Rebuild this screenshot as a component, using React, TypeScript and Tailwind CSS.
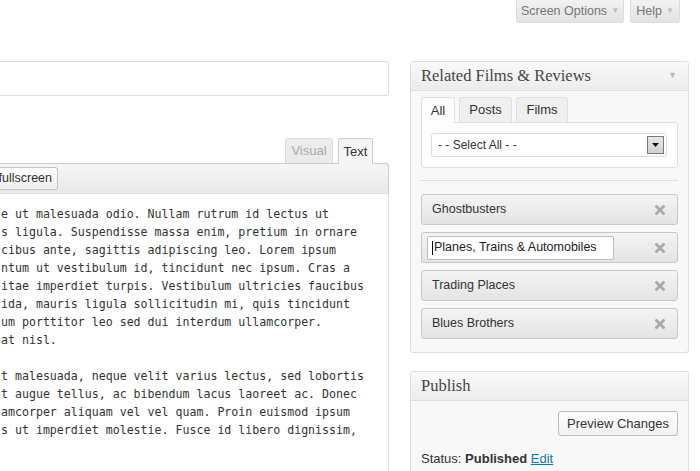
import type { ReactNode } from "react";

const films = ["Ghostbusters", "Planes, Trains & Automobiles", "Trading Places", "Blues Brothers"];

const paraOne = [
  "e ut malesuada odio. Nullam rutrum id lectus ut",
  "s ligula. Suspendisse massa enim, pretium in ornare",
  "cibus ante, sagittis adipiscing leo. Lorem ipsum",
  "ntum ut vestibulum id, tincidunt nec ipsum. Cras a",
  "itae imperdiet turpis. Vestibulum ultricies faucibus",
  "ida, mauris ligula sollicitudin mi, quis tincidunt",
  "um porttitor leo sed dui interdum ullamcorper.",
  "at nisl.",
];

const paraTwo = [
  "t malesuada, neque velit varius lectus, sed lobortis",
  "t augue tellus, ac bibendum lacus laoreet ac. Donec",
  "amcorper aliquam vel vel quam. Proin euismod ipsum",
  "s ut imperdiet molestie. Fusce id libero dignissim,",
];

function RemoveIcon() {
  return (
    <svg width="10" height="10" viewBox="0 0 10 10" className="shrink-0">
      <path d="M1.5 1.5 L8.5 8.5 M8.5 1.5 L1.5 8.5" stroke="#a9a9a9" strokeWidth="2.8" strokeLinecap="square" />
    </svg>
  );
}

function Panel({ title, arrow, children }: { title: string; arrow?: boolean; children: ReactNode }) {
  return (
    <div className="rounded-[3px] border border-[#dfdfdf] bg-[#f8f8f8]">
      <div className="flex h-[29px] items-center justify-between border-b border-[#dfdfdf] bg-gradient-to-b from-[#f9f9f9] to-[#ececec] pl-[10px] pr-[11px]">
        <span className="font-['Liberation_Serif',serif] text-[16.5px] text-[#464646]">{title}</span>
        {arrow && <span className="text-[9px] text-[#bbb]">▼</span>}
      </div>
      {children}
    </div>
  );
}

export default function App() {
  return (
    <div className="h-[471px] w-[700px] overflow-hidden bg-white font-['Liberation_Sans',Arial,sans-serif] text-[#333]">
      {/* top tabs */}
      <div className="flex h-[23px] justify-end gap-[6px] pr-[20px]">
        <div className="flex h-[23px] w-[108px] items-center justify-center gap-[4px] rounded-b-[3px] border border-t-0 border-[#dcdcdc] bg-gradient-to-b from-[#f2f2f2] to-[#e2e2e2] text-[12.5px] text-[#777]">
          Screen Options <span className="text-[8px] text-[#bbb]">▼</span>
        </div>
        <div className="flex h-[23px] w-[50px] items-center justify-center gap-[4px] rounded-b-[3px] border border-t-0 border-[#dcdcdc] bg-gradient-to-b from-[#f2f2f2] to-[#e2e2e2] text-[12.5px] text-[#777]">
          Help <span className="text-[8px] text-[#bbb]">▼</span>
        </div>
      </div>

      <div className="mt-[38px] flex">
        {/* editor column */}
        <div className="w-[389px] shrink-0">
          <div className="h-[35px] rounded-r-[3px] border border-l-0 border-[#dddddd] bg-white" />

          <div className="mt-[42px] flex justify-end gap-[5px] pr-[16px]">
            <div className="flex h-[25px] w-[48px] items-center justify-center rounded-t-[3px] border border-b-0 border-[#dfdfdf] bg-[#ebebeb] text-[13px] text-[#aaa]">
              Visual
            </div>
            <div className="flex h-[26px] w-[35px] -mb-px items-center justify-center rounded-t-[3px] border border-b-0 border-[#cccccc] bg-[#f5f5f5] text-[13px] text-[#333]">
              Text
            </div>
          </div>

          <div className="flex h-[31px] items-center rounded-tr-[3px] border border-l-0 border-[#cccccc] border-b-[#dfdfdf] bg-gradient-to-b from-[#f5f5f5] to-[#e9e9e9]">
            <div className="flex h-[23px] w-[58px] items-center justify-end rounded-r-[3px] border border-l-0 border-[#c3c3c3] bg-gradient-to-b from-[#fdfdfd] to-[#f0f0f0] pr-[5px] text-[12.5px] text-[#333]">
              fullscreen
            </div>
          </div>

          <div className="h-[300px] border-r border-[#dfdfdf] bg-white pt-[11px] pl-[1px] font-['DejaVu_Sans_Mono',monospace] text-[11.6px] leading-[18px] text-[#333]">
            {paraOne.map((l) => (
              <div key={l} className="whitespace-pre">{l}</div>
            ))}
            <div className="h-[18px]" />
            {paraTwo.map((l) => (
              <div key={l} className="whitespace-pre">{l}</div>
            ))}
          </div>
        </div>

        {/* sidebar */}
        <div className="ml-[21px] w-[279px] shrink-0">
          <Panel title="Related Films & Reviews" arrow>
            <div className="px-[10px] pt-[6px] pb-[13px]">
              <div className="flex gap-[4px] text-[13px]">
                <div className="relative z-10 -mb-px flex h-[26px] w-[34px] items-center justify-center rounded-t-[3px] border border-b-0 border-[#dfdfdf] bg-[#fdfdfd]">
                  All
                </div>
                <div className="flex h-[25px] w-[53px] items-center justify-center rounded-t-[3px] border border-b-0 border-[#dfdfdf] bg-[#efefef]">
                  Posts
                </div>
                <div className="flex h-[25px] w-[52px] items-center justify-center rounded-t-[3px] border border-b-0 border-[#dfdfdf] bg-[#efefef]">
                  Films
                </div>
              </div>
              <div className="rounded-[3px] rounded-tl-none border border-[#dfdfdf] bg-[#fdfdfd] px-[9px] pt-[10px] pb-[10px] pr-[10px]">
                <div className="flex h-[24px] items-center justify-between rounded-[3px] border border-[#dddddd] bg-white pl-[6px] pr-[2px] text-[12px]">
                  <span>- - Select All - -</span>
                  <div className="flex h-[18px] w-[17px] items-center justify-center border border-[#7a7a7a] bg-gradient-to-b from-[#e8e8e8] to-[#d0d0d0]">
                    <svg width="7" height="4" viewBox="0 0 7 4">
                      <path d="M0 0 H7 L3.5 4 Z" fill="#111" />
                    </svg>
                  </div>
                </div>
              </div>

              <div className="mt-[12px] border-t border-[#dfdfdf]" />

              <div className="mt-[13px] flex flex-col gap-[7px]">
                {films.map((f, i) => (
                  <div
                    key={f}
                    className="flex h-[31px] items-center justify-between rounded-[3px] border border-[#c8c8c8] bg-gradient-to-b from-[#f4f4f4] to-[#e4e4e4] pr-[12px] text-[12.5px]"
                    style={{ paddingLeft: i === 1 ? 5 : 10 }}
                  >
                    {i === 1 ? (
                      <div className="relative flex h-[24px] w-[187px] items-center rounded-[2px] border border-[#bcbcbc] bg-white pl-[4px] text-[#222]">
                        <span className="mr-px inline-block h-[14px] w-px bg-black" />
                        {f}
                      </div>
                    ) : (
                      <span>{f}</span>
                    )}
                    <RemoveIcon />
                  </div>
                ))}
              </div>
            </div>
          </Panel>

          <div className="mt-[18px]">
            <Panel title="Publish">
              <div className="px-[10px] pt-[10px] pb-[10px]">
                <div className="flex justify-end">
                  <div className="flex h-[25px] w-[120px] items-center justify-center rounded-[3px] border border-[#bbbbbb] bg-gradient-to-b from-[#fefefe] to-[#f1f1f1] text-[13px]">
                    Preview Changes
                  </div>
                </div>
                <div className="mt-[13px] text-[13px]">
                  Status: <span className="font-bold">Published</span>{" "}
                  <span className="text-[#21759b] underline">Edit</span>
                </div>
              </div>
            </Panel>
          </div>
        </div>
      </div>
    </div>
  );
}
